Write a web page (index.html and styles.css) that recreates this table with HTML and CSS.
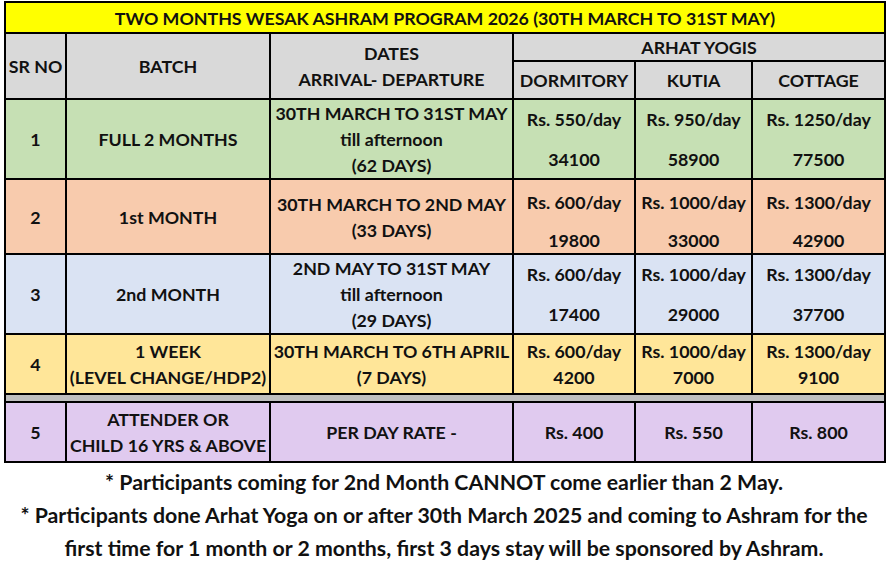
FILE: index.html
```html
<!DOCTYPE html>
<html>
<head>
<meta charset="utf-8">
<link rel="stylesheet" href="styles.css">
</head>
<body>
<div class="page">
<table class="prog">
  <colgroup>
    <col class="c-sr"><col class="c-batch"><col class="c-dates"><col class="c-dorm"><col class="c-kutia"><col class="c-cott">
  </colgroup>
  <tr class="r-title"><td colspan="6">TWO MONTHS WESAK ASHRAM PROGRAM 2026 (30TH MARCH TO 31ST MAY)</td></tr>
  <tr class="r-head1 grey">
    <td rowspan="2">SR NO</td>
    <td rowspan="2">BATCH</td>
    <td rowspan="2"><div>DATES</div><div>ARRIVAL- DEPARTURE</div></td>
    <td colspan="3" class="yogis">ARHAT YOGIS</td>
  </tr>
  <tr class="r-head2 grey">
    <td>DORMITORY</td><td>KUTIA</td><td>COTTAGE</td>
  </tr>
  <tr class="r1 green">
    <td>1</td>
    <td>FULL 2 MONTHS</td>
    <td><div>30TH MARCH TO 31ST MAY</div><div>till afternoon</div><div>(62 DAYS)</div></td>
    <td><div class="pair wide"><span>Rs. 550/day</span><span>34100</span></div></td>
    <td><div class="pair wide"><span>Rs. 950/day</span><span>58900</span></div></td>
    <td><div class="pair wide"><span>Rs. 1250/day</span><span>77500</span></div></td>
  </tr>
  <tr class="r2 orange">
    <td>2</td>
    <td>1st MONTH</td>
    <td><div>30TH MARCH TO 2ND MAY</div><div>(33 DAYS)</div></td>
    <td><div class="pair mid"><span>Rs. 600/day</span><span>19800</span></div></td>
    <td><div class="pair mid"><span>Rs. 1000/day</span><span>33000</span></div></td>
    <td><div class="pair mid"><span>Rs. 1300/day</span><span>42900</span></div></td>
  </tr>
  <tr class="r3 blue">
    <td>3</td>
    <td>2nd MONTH</td>
    <td><div>2ND MAY TO 31ST MAY</div><div>till afternoon</div><div>(29 DAYS)</div></td>
    <td><div class="pair wide"><span>Rs. 600/day</span><span>17400</span></div></td>
    <td><div class="pair wide"><span>Rs. 1000/day</span><span>29000</span></div></td>
    <td><div class="pair wide"><span>Rs. 1300/day</span><span>37700</span></div></td>
  </tr>
  <tr class="r4 yellow">
    <td>4</td>
    <td><div>1 WEEK</div><div>(LEVEL CHANGE/HDP2)</div></td>
    <td><div>30TH MARCH TO 6TH APRIL</div><div>(7 DAYS)</div></td>
    <td><div class="pair"><span>Rs. 600/day</span><span>4200</span></div></td>
    <td><div class="pair"><span>Rs. 1000/day</span><span>7000</span></div></td>
    <td><div class="pair"><span>Rs. 1300/day</span><span>9100</span></div></td>
  </tr>
  <tr class="r-sep"><td colspan="6"></td></tr>
  <tr class="r5 purple">
    <td>5</td>
    <td><div>ATTENDER OR</div><div>CHILD 16 YRS &amp; ABOVE</div></td>
    <td>PER DAY RATE -</td>
    <td>Rs. 400</td>
    <td>Rs. 550</td>
    <td>Rs. 800</td>
  </tr>
</table>
<div class="notes">
  <p class="note1">* Participants coming for 2nd Month CANNOT come earlier than 2 May.</p>
  <p class="note2">* Participants done Arhat Yoga on or after 30th March 2025 and coming to Ashram for the<br>first time for 1 month or 2 months, first 3 days stay will be sponsored by Ashram.</p>
</div>
</div>
</body>
</html>
```
FILE: styles.css
```css
html, body {
  margin: 0;
  padding: 0;
  background: #ffffff;
}
.page {
  width: 890px;
  height: 564px;
  padding: 1px 0 0 4px;
  box-sizing: border-box;
  font-family: Lato, "Open Sans", sans-serif;
  font-weight: 700;
  color: #111111;
}
.prog {
  border-collapse: collapse;
  table-layout: fixed;
  width: 880px;
  font-size: 17.8px;
  line-height: 26px;
}
.c-sr { width: 61px; }
.c-batch { width: 204px; }
.c-dates { width: 243px; }
.c-dorm { width: 122px; }
.c-kutia { width: 117px; }
.c-cott { width: 133px; }
.prog td {
  border: 2px solid #000;
  text-align: center;
  vertical-align: middle;
  padding: 0;
  white-space: nowrap;
}
.r-title td {
  background: #ffff00;
  height: 29px;
}
.grey td { background: #d9d9d9; }
.r-head1 td.yogis { height: 24px; }
.r-head2 td { height: 36px; }
.green td { background: #c6e0b4; }
.orange td { background: #f8cbad; }
.blue td { background: #dae3f3; }
.yellow td { background: #ffe699; }
.purple td { background: #e0caef; }
.r1 td { height: 76px; }
.r2 td { height: 73px; }
.r3 td { height: 78px; }
.r4 td { height: 58px; }
.r5 td { height: 58px; }
.r-sep td {
  background: #bfbfbf;
  height: 6px;
  line-height: 6px;
}
.pair {
  display: flex;
  flex-direction: column;
  align-items: center;
}
.pair.wide { gap: 14px; }
.pair.mid { gap: 12px; padding-top: 8px; }
.notes {
  text-align: center;
  font-size: 21.3px;
  width: 880px;
}
.notes p { margin: 0; }
.note1 {
  line-height: 34px;
  margin-top: 2px !important;
}
.note2 {
  line-height: 33px;
}
```
